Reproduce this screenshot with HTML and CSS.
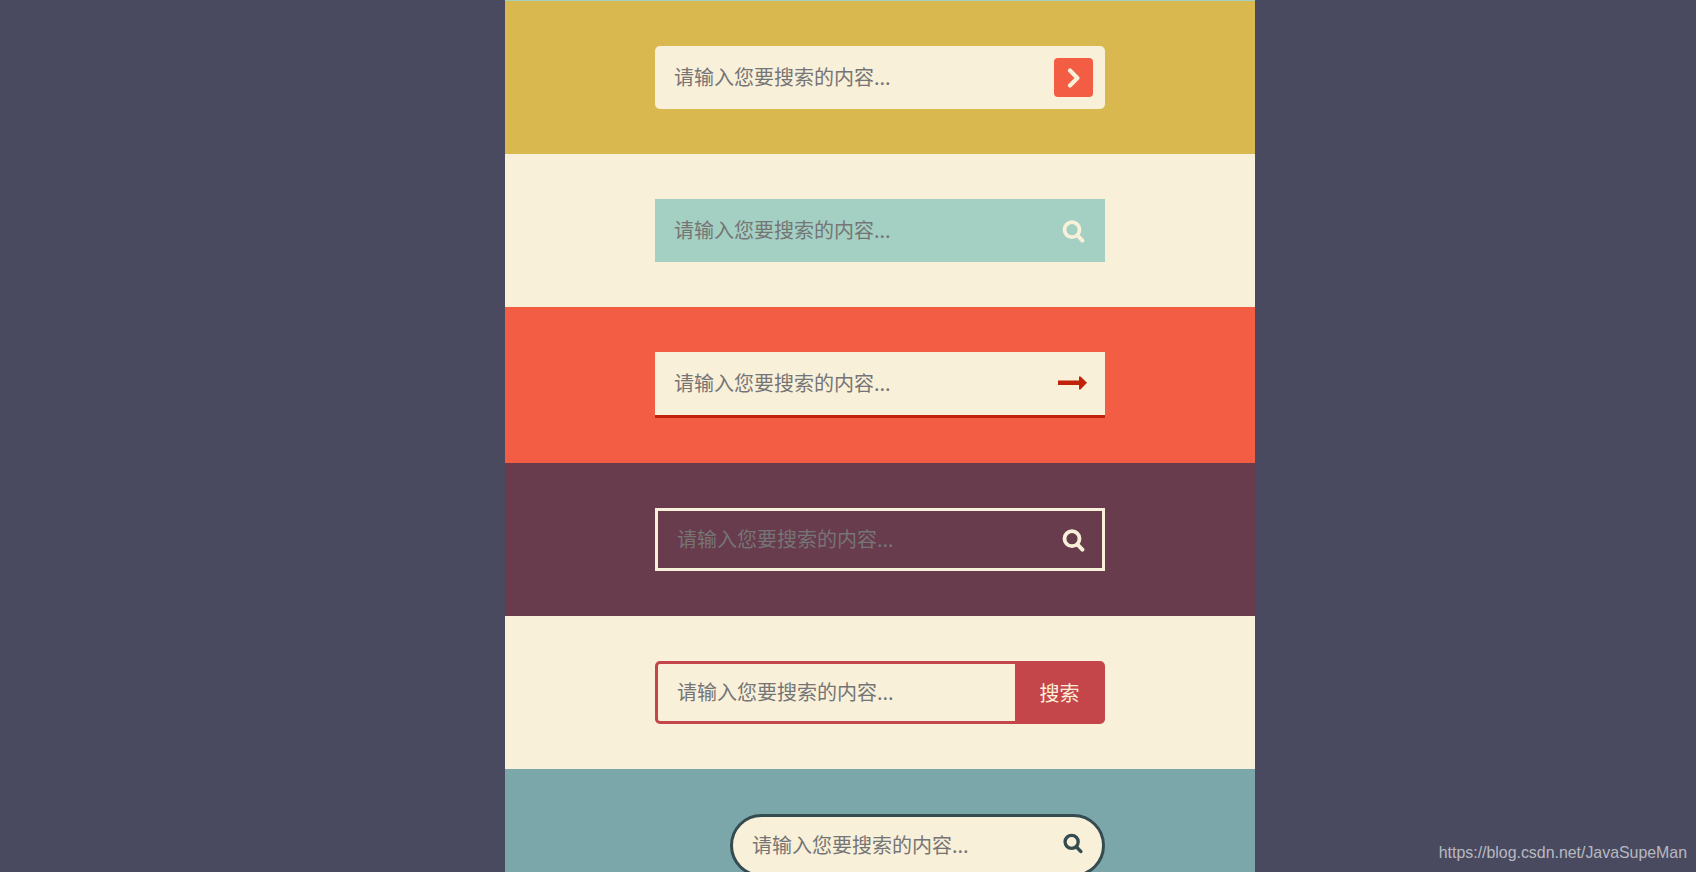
FILE: index.html
```html
<!DOCTYPE html>
<html lang="zh-CN">
<head>
<meta charset="utf-8">
<title>搜索框</title>
<link rel="stylesheet" href="styles.css">
</head>
<body>
<svg class="sprite" aria-hidden="true">
  <symbol id="i-search" viewBox="0 0 24 24">
    <circle cx="11" cy="10.7" r="7.5" fill="none" stroke="currentColor" stroke-width="3.8"/>
    <path d="M16.6 16.6 21.4 21.6" fill="none" stroke="currentColor" stroke-width="4" stroke-linecap="round"/>
  </symbol>
</svg>
<main class="column">
  <section class="band band-yellow">
    <form class="bar bar-rounded">
      <input class="field" type="text" placeholder="请输入您要搜索的内容...">
      <button class="btn btn-square" type="button" aria-label="搜索">
        <svg class="icon-chevron" viewBox="0 0 14 20"><path d="M3 2.6 10.4 10 3 17.4" fill="none" stroke="currentColor" stroke-width="4.2" stroke-linecap="round" stroke-linejoin="round"/></svg>
      </button>
    </form>
  </section>
  <section class="band band-cream">
    <form class="bar bar-teal">
      <input class="field" type="text" placeholder="请输入您要搜索的内容...">
      <button class="btn btn-icon btn-cream" type="button" aria-label="搜索"><svg class="icon-search"><use href="#i-search"/></svg></button>
    </form>
  </section>
  <section class="band band-red">
    <form class="bar bar-underline">
      <input class="field" type="text" placeholder="请输入您要搜索的内容...">
      <button class="btn btn-icon btn-darkred btn-arrow" type="button" aria-label="搜索">
        <svg class="icon-arrow" viewBox="0 0 30 14"><path d="M1 4.6H22V.4H23.5L30 6.8 23.5 13.4H22V9H1Z" fill="currentColor"/></svg>
      </button>
    </form>
  </section>
  <section class="band band-plum">
    <form class="bar bar-outline">
      <input class="field" type="text" placeholder="请输入您要搜索的内容...">
      <button class="btn btn-icon btn-cream btn-inset" type="button" aria-label="搜索"><svg class="icon-search"><use href="#i-search"/></svg></button>
    </form>
  </section>
  <section class="band band-cream">
    <form class="bar bar-crimson">
      <input class="field" type="text" placeholder="请输入您要搜索的内容...">
      <button class="btn btn-text" type="button">搜索</button>
    </form>
  </section>
  <section class="band band-slate">
    <form class="bar bar-pill">
      <input class="field" type="text" placeholder="请输入您要搜索的内容...">
      <button class="btn btn-icon btn-dark" type="button" aria-label="搜索"><svg class="icon-search icon-small"><use href="#i-search"/></svg></button>
    </form>
  </section>
</main>
<div class="watermark">https://blog.csdn.net/JavaSupeMan</div>
</body>
</html>
```
FILE: styles.css
```css
* { box-sizing: border-box; }
html, body { margin: 0; height: 872px; overflow: hidden; }
body {
  position: relative;
  background: #494a5f;
  font-family: "Noto Sans CJK SC", "Liberation Sans", sans-serif;
}
.sprite { display: none; }
.column { width: 750px; height: 872px; margin-left: 505px; overflow: hidden; }
.band { padding: 45px 150px; }
.band-yellow { background: #d9b94f; border-top: 1px solid #a3d0c3; }
.band-cream { background: #f9f0da; }
.band-red { background: #f35d43; }
.band-plum { background: #683b4d; }
.band-slate { background: #7ba7ab; }

.bar {
  display: flex;
  align-items: center;
  width: 450px;
  height: 63px;
  background: #f9f0da;
}
.bar-rounded { border-radius: 5px; }
.bar-teal { background: #a3d0c3; }
.bar-underline { height: 66px; border-bottom: 3px solid #c1230a; }
.bar-outline { background: transparent; border: 3px solid #f9f0da; }
.bar-crimson { border: 3px solid #c5464a; border-radius: 5px; }
.bar-pill {
  width: 375px;
  margin-left: auto;
  border: 3px solid #344b50;
  border-radius: 32px;
}

.field {
  flex: 1;
  min-width: 0;
  height: 100%;
  padding: 0 0 3px 19px;
  border: 0;
  outline: 0;
  background: transparent;
  font: inherit;
  font-size: 20px;
}
.btn {
  display: flex;
  align-items: center;
  justify-content: center;
  flex: none;
  padding: 0;
  border: 0;
  background: transparent;
  font: inherit;
}
.btn-square {
  width: 39px;
  height: 39px;
  margin-right: 12px;
  border-radius: 4px;
  background: #f35d43;
  color: #f9f0da;
}
.btn-icon { width: 42px; height: 42px; margin-right: 11px; }
.btn-inset { margin-right: 8px; }
.btn-cream { color: #f9f0da; }
.btn-darkred { color: #c1230a; }
.btn-arrow { margin: 0 12px 2px 0; }
.btn-dark { color: #344b50; margin: 0 9px 5px 0; }
.btn-text {
  width: 87px;
  height: 100%;
  padding-left: 2px;
  background: #c5464a;
  color: #f9f0da;
  font-size: 20px;
}
.icon-chevron { width: 14px; height: 20px; }
.icon-search { width: 24px; height: 24px; }
.icon-small { width: 21px; height: 22px; }
.icon-arrow { width: 30px; height: 14px; }

.watermark {
  position: absolute;
  right: 9px;
  bottom: 10px;
  color: rgba(255, 255, 255, 0.62);
  font-family: "Liberation Sans", Arial, sans-serif;
  font-size: 15.9px;
  line-height: 18px;
}
```
